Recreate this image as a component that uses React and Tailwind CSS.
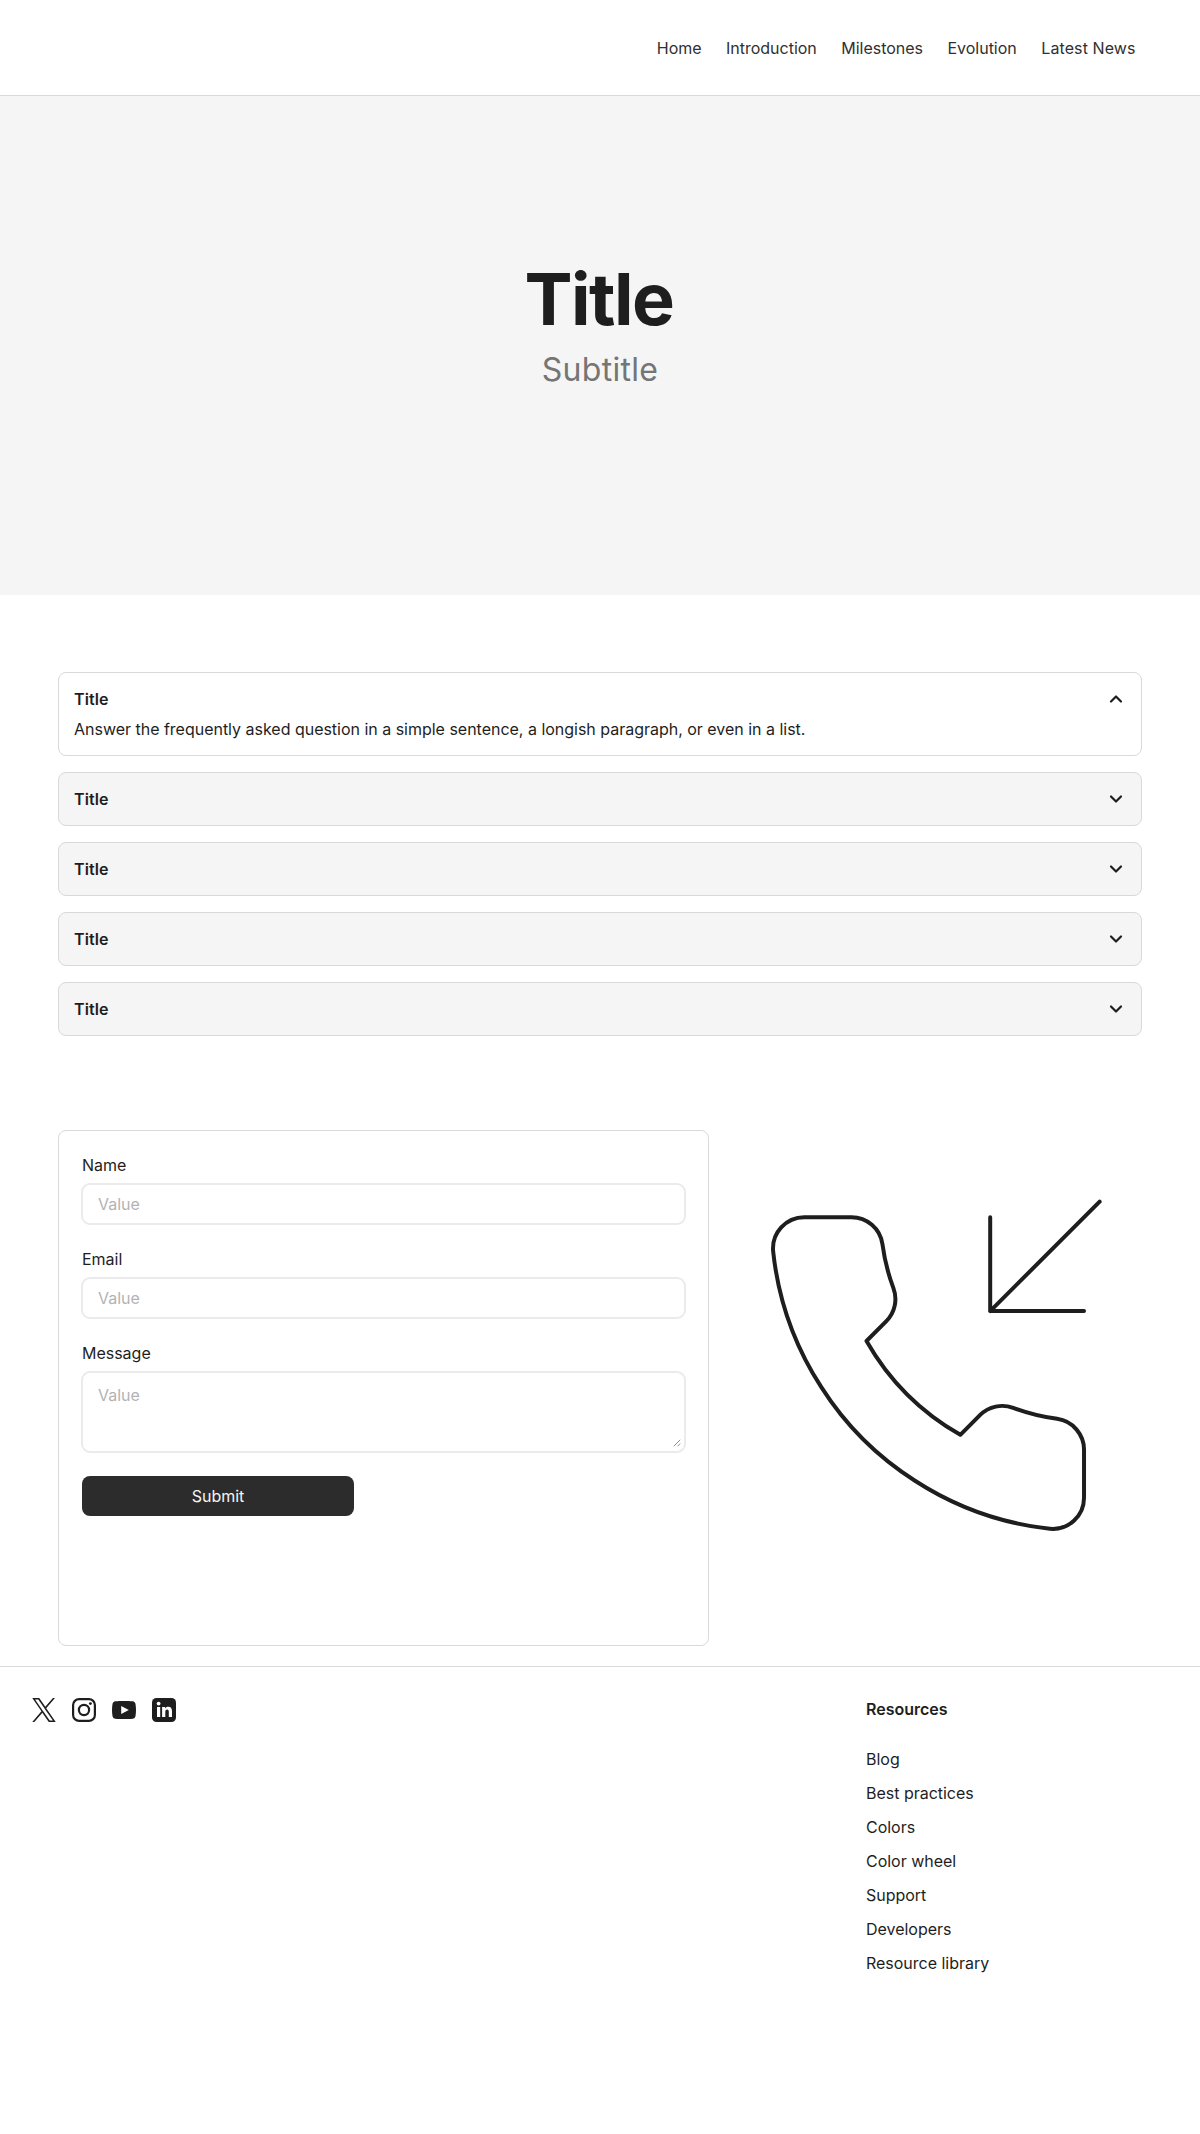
const navItems = ["Home", "Introduction", "Milestones", "Evolution", "Latest News"];

const resources = [
  "Blog",
  "Best practices",
  "Colors",
  "Color wheel",
  "Support",
  "Developers",
  "Resource library",
];

function Chevron({ up }) {
  return (
    <svg
      viewBox="0 0 20 20"
      className="size-5 shrink-0"
      fill="none"
      stroke="#1e1e1e"
      strokeWidth="2.2"
      strokeLinecap="round"
      strokeLinejoin="round"
    >
      <path d={up ? "M15 12.5L10 7.5L5 12.5" : "M5 7.5L10 12.5L15 7.5"} />
    </svg>
  );
}

function AccordionItem({ children }) {
  const open = Boolean(children);
  return (
    <div
      className={
        open
          ? "h-[84px] rounded-lg border border-[#d9d9d9] bg-white px-[15px] pt-[15px]"
          : "h-[54px] rounded-lg border border-[#d9d9d9] bg-[#f5f5f5] px-[15px] pt-[15px]"
      }
    >
      <div className="flex items-center justify-between">
        <h3 className="font-semibold leading-[22px] tracking-[0.1px]">Title</h3>
        <Chevron up={open} />
      </div>
      {open && <p className="mt-2 leading-[22px]">{children}</p>}
    </div>
  );
}

const fieldClass =
  "block w-full rounded-[9px] border-2 border-[#ebebeb] bg-white px-[15px] leading-[22px] outline-none placeholder:text-[#b3b3b3]";

function Field({ label, children }) {
  return (
    <label className="flex flex-col gap-[7px]">
      <span className="pl-px leading-[22px]">{label}</span>
      {children}
    </label>
  );
}

function PhoneIncoming() {
  return (
    <svg
      viewBox="0 0 24 24"
      className="ml-[30.7px] mt-[56px] size-[375.3px]"
      fill="none"
      stroke="#1e1e1e"
      strokeWidth="0.255"
      strokeLinecap="round"
      strokeLinejoin="round"
    >
      <path d="M16 2v6h6M23 1l-7 7" />
      <path d="M22 16.92v3a2 2 0 0 1-2.18 2 19.79 19.79 0 0 1-8.63-3.07 19.5 19.5 0 0 1-6-6 19.79 19.79 0 0 1-3.07-8.67A2 2 0 0 1 4.11 2h3a2 2 0 0 1 2 1.72 12.84 12.84 0 0 0 .7 2.81 2 2 0 0 1-.45 2.11L8.09 9.91a16 16 0 0 0 6 6l1.27-1.27a2 2 0 0 1 2.11-.45 12.84 12.84 0 0 0 2.81.7A2 2 0 0 1 22 16.92z" />
    </svg>
  );
}

function SocialIcons() {
  return (
    <div className="flex h-6 gap-4 text-[#1e1e1e]">
      <svg viewBox="0 0 1200 1227" className="size-6" fill="currentColor">
        <path d="M714.163 519.284L1160.89 0H1055.03L667.137 450.887L357.328 0H0L468.492 681.821L0 1226.37H105.866L515.491 750.218L842.672 1226.37H1200L714.137 519.284H714.163ZM569.165 687.828L521.697 619.934L144.011 79.6944H306.615L611.412 515.685L658.88 583.579L1055.08 1150.3H892.476L569.165 687.854V687.828Z" />
      </svg>
      <svg viewBox="0 0 24 24" className="size-6" fill="none" stroke="currentColor">
        <rect x="1.1" y="1.1" width="21.8" height="21.8" rx="6" strokeWidth="2.2" />
        <circle cx="12" cy="12" r="5.1" strokeWidth="2.2" />
        <circle cx="18.4" cy="5.6" r="1.45" fill="currentColor" stroke="none" />
      </svg>
      <svg viewBox="0 0 24 24" className="size-6" fill="currentColor">
        <path
          fillRule="evenodd"
          d="M12 3c3.2 0 6.5.1 8.6.3 1.6.2 2.7 1.2 2.9 2.8.3 1.9.5 3.9.5 5.9s-.2 4-.5 5.9c-.2 1.6-1.3 2.6-2.9 2.8-2.1.2-5.4.3-8.6.3s-6.5-.1-8.6-.3c-1.6-.2-2.7-1.2-2.9-2.8C.2 16 0 14 0 12s.2-4 .5-5.9c.2-1.6 1.3-2.6 2.9-2.8C5.5 3.1 8.8 3 12 3ZM9.2 8v8l7.6-4L9.2 8Z"
        />
      </svg>
      <svg viewBox="0 0 24 24" className="size-6">
        <rect width="24" height="24" rx="4.5" fill="currentColor" />
        <g fill="#fff">
          <circle cx="6.6" cy="5.6" r="1.9" />
          <path d="M5 9h3.2v10H5zM10.1 9h3v1.4c.6-1 1.7-1.65 3.1-1.65 2.9 0 3.8 1.8 3.8 4.55V19h-3.2v-5c0-1.5-.4-2.4-1.6-2.4-1.3 0-1.9.9-1.9 2.4v5h-3.2z" />
        </g>
      </svg>
    </div>
  );
}

export default function App() {
  return (
    <div className="min-h-[2134px] w-[1200px] bg-white font-['Inter',sans-serif] text-base tracking-[-0.015px] text-[#1e1e1e]">
      <header className="flex h-24 items-center justify-end border-b border-[#d9d9d9] pr-[64.4px]">
        <nav className="flex gap-[24.5px] text-[#303030]">
          {navItems.map((item) => (
            <a key={item} className="last:tracking-[0.1px]">
              {item}
            </a>
          ))}
        </nav>
      </header>

      <section className="flex h-[499px] flex-col items-center bg-[#f5f5f5] pt-[160px]">
        <h1 className="mr-[2px] text-[72px] font-bold leading-[86px] tracking-[-0.021em]">Title</h1>
        <p className="mt-[9px] text-[32px] leading-[38px] tracking-[0.3px] text-[#757575]">Subtitle</p>
      </section>

      <section className="mx-[58px] mt-[77px] flex flex-col gap-4">
        <AccordionItem>
          Answer the frequently asked question in a simple sentence, a longish paragraph, or even in a list.
        </AccordionItem>
        <AccordionItem />
        <AccordionItem />
        <AccordionItem />
        <AccordionItem />
      </section>

      <section className="ml-[58px] mt-[94px] flex h-[516px] items-start">
        <form className="flex h-[516px] w-[651px] flex-col gap-[23px] rounded-lg border border-[#d9d9d9] px-[22px] pt-[23px]">
          <Field label="Name">
            <input placeholder="Value" className={`${fieldClass} h-[42px]`} />
          </Field>
          <Field label="Email">
            <input placeholder="Value" className={`${fieldClass} h-[42px]`} />
          </Field>
          <Field label="Message">
            <div className="relative">
              <textarea placeholder="Value" className={`${fieldClass} h-[82px] resize-none pt-[11px]`} />
              <svg viewBox="0 0 8 8" className="absolute bottom-[6px] right-[5px] size-2" stroke="#8c8c8c" fill="none">
                <path d="M.8 7.2L7.2.8M4.6 7.2L7.2 4.6" />
              </svg>
            </div>
          </Field>
          <button type="button" className="ml-px h-10 w-[272px] rounded-lg bg-[#2c2c2c] text-[#f5f5f5]">
            Submit
          </button>
        </form>
        <PhoneIncoming />
      </section>

      <footer className="mt-5 flex items-start border-t border-[#d9d9d9] pl-8 pt-[31px]">
        <SocialIcons />
        <div className="ml-[690px]">
          <h2 className="font-semibold leading-[22px]">Resources</h2>
          <ul className="mt-7 flex flex-col gap-3">
            {resources.map((item) => (
              <li key={item} className="leading-[22px]">
                {item}
              </li>
            ))}
          </ul>
        </div>
      </footer>
    </div>
  );
}
